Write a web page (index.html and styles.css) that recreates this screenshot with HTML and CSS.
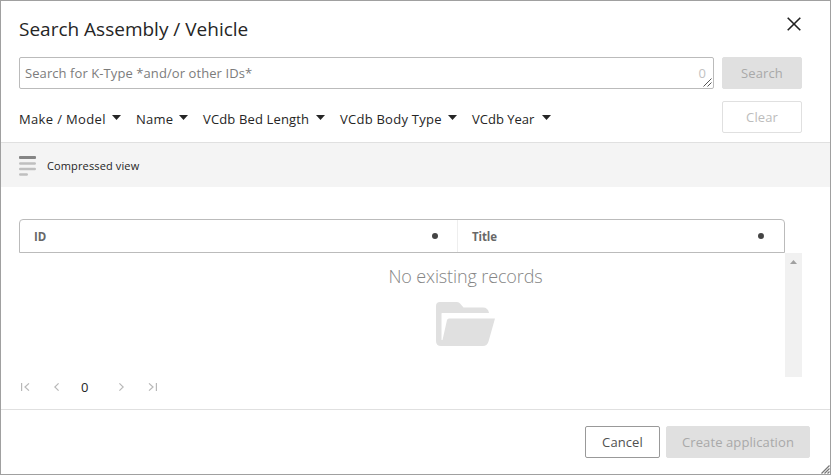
FILE: index.html
```html
<!DOCTYPE html>
<html lang="en">
<head>
<meta charset="utf-8">
<title>Search Assembly / Vehicle</title>
<link rel="stylesheet" href="styles.css">
</head>
<body>
<div class="dialog">
  <header class="header">
    <h1 class="title">Search Assembly / Vehicle</h1>
    <svg class="close" width="14" height="14" viewBox="0 0 14 14"><path d="M.7.7l12.6 12.6M13.3.7L.7 13.3"/></svg>
  </header>
  <section class="search">
    <div class="field">
      <span class="placeholder">Search for K-Type *and/or other IDs*</span>
      <span class="count">0</span>
      <svg class="grip" width="9" height="9" viewBox="0 0 9 9"><path d="M.5 8.5l8-8M4.5 8.5l4-4"/></svg>
    </div>
    <button class="btn filled">Search</button>
    <nav class="filters">
      <span class="filter f1"><span>Make / Model</span><i class="caret"></i></span>
      <span class="filter f2"><span>Name</span><i class="caret"></i></span>
      <span class="filter f3"><span>VCdb Bed Length</span><i class="caret"></i></span>
      <span class="filter f4"><span>VCdb Body Type</span><i class="caret"></i></span>
      <span class="filter f5"><span>VCdb Year</span><i class="caret"></i></span>
    </nav>
    <button class="btn ghost">Clear</button>
  </section>
  <div class="toolbar">
    <svg width="17" height="20" viewBox="0 0 17 20"><rect width="17" height="3" rx="1" fill="#858585"/><path d="M1.300 7.500h14.400M1.300 13h14.400M1.300 18.500h6.400" stroke="#bfbfbf" stroke-width="2.600" stroke-linecap="round"/></svg>
    <span class="view">Compressed view</span>
  </div>
  <main class="content">
    <div class="thead">
      <div class="th"><span>ID</span><i class="dot"></i></div>
      <div class="th second"><span>Title</span><i class="dot"></i></div>
    </div>
    <div class="tbody">
      <div class="empty">
        <span class="message">No existing records</span>
        <svg width="59" height="44" viewBox="0 0 59 44"><path fill="#e0e0e0" d="M4 0H21Q23 0 24.500 2L27.500 5.500H47Q52 5.500 53 11H6Q5.500 11 5.500 12V38L6.500 38L11 18Q11.500 16.500 13 16.500H59L52.500 39.500Q51 44 47 44H5Q0 44 0 39V4Q0 0 4 0Z"/></svg>
      </div>
      <div class="scrollbar"><svg width="7" height="4" viewBox="0 0 7 4"><path fill="#a0a0a0" d="M3.500 0L7 4H0z"/></svg></div>
    </div>
    <div class="pager">
      <svg class="first" width="9" height="8" viewBox="0 0 9 8"><path d="M.6 0v8M8 .4L4 4l4 3.600"/></svg>
      <svg class="prev" width="5" height="8" viewBox="0 0 5 8"><path d="M4.600 .4L.8 4l3.800 3.600"/></svg>
      <span class="page">0</span>
      <svg class="next" width="5" height="8" viewBox="0 0 5 8"><path d="M.4 .4L4.200 4 .4 7.600"/></svg>
      <svg class="last" width="9" height="8" viewBox="0 0 9 8"><path d="M8.400 0v8M1 .4L5 4 1 7.600"/></svg>
    </div>
  </main>
  <footer class="footer">
    <button class="btn outline">Cancel</button>
    <button class="btn filled create">Create application</button>
  </footer>
  <svg class="corner" width="9" height="9" viewBox="0 0 9 9"><path d="M.5 8.500l8-8M3.500 8.500l5-5M6.500 8.500l2-2"/></svg>
</div>
</body>
</html>
```

FILE: styles.css
```css
* { box-sizing: border-box; }
body {
  margin: 0;
  font-family: "Open Sans", "Noto Sans", sans-serif;
  font-size: 13px;
  color: #252525;
}
svg { display: block; flex: none; }
.dialog {
  position: relative;
  width: 831px;
  height: 475px;
  border: 1px solid #a0a0a0;
  background: #fff;
  overflow: hidden;
}
.header {
  display: flex;
  justify-content: space-between;
  height: 56px;
  padding: 0 29px 0 18px;
}
.title {
  margin: 13px 0 0;
  font-size: 19px;
  line-height: 30px;
  font-weight: 400;
  white-space: nowrap;
}
.close { margin-top: 16px; stroke: #222; stroke-width: 1.6; fill: none; }
.search {
  display: grid;
  grid-template-columns: 695px 80px;
  grid-template-rows: 32px 32px;
  gap: 12px 8px;
  height: 85px;
  padding-left: 18px;
}
.field {
  position: relative;
  display: flex;
  justify-content: space-between;
  padding: 0 7px 0 5px;
  border: 1px solid #bbb;
  border-radius: 2px;
  line-height: 31px;
  color: #7c7c7c;
}
.placeholder { letter-spacing: .08px; }
.count { color: #c2c2c2; }
.grip { position: absolute; right: 1px; bottom: 1px; stroke: #555; stroke-width: 1; fill: none; }
.btn {
  height: 32px;
  padding: 0;
  border: 1px solid #e0e0e0;
  border-radius: 2px;
  background: #fff;
  color: #bcbcbc;
  font: 13px/30px "Open Sans", "Noto Sans", sans-serif;
  letter-spacing: .1px;
  white-space: nowrap;
}
.filled { background: #e0e0e0; color: #a9a9a9; }
.filters { display: flex; align-items: center; padding-top: 4px; white-space: nowrap; }
.filter { display: flex; justify-content: space-between; flex: none; margin-right: 15px; line-height: 20px; }
.f1 { width: 102px; letter-spacing: .35px; }
.f2 { width: 52px; letter-spacing: .2px; }
.f3 { width: 122px; letter-spacing: .15px; }
.f4 { width: 117px; letter-spacing: .25px; }
.f5 { width: 79px; }
.caret {
  width: 9px;
  height: 5px;
  margin-top: 6px;
  background: #252525;
  clip-path: polygon(0 0, 100% 0, 50% 100%);
}
.toolbar {
  display: flex;
  align-items: center;
  gap: 11px;
  height: 45px;
  padding: 1px 0 0 18px;
  border-top: 1px solid #e0e0e0;
  background: #f4f4f4;
  font-size: 11px;
  letter-spacing: .13px;
}
.content { height: 222px; padding: 32px 0 0 18px; }
.thead {
  display: flex;
  width: 766px;
  height: 34px;
  border: 1px solid #bbb;
  border-radius: 4px 4px 0 0;
  font-size: 11.500px;
  font-weight: 700;
  letter-spacing: -.1px;
  color: #686868;
}
.th {
  display: flex;
  align-items: center;
  justify-content: space-between;
  width: 437px;
  padding: 1px 19px 0 14px;
}
.second { width: 327px; padding-right: 20px; border-left: 1px solid #eee; }
.dot { width: 6px; height: 6px; margin-top: -2px; border-radius: 50%; background: #444; }
.tbody { display: flex; width: 783px; height: 124px; }
.empty {
  display: flex;
  flex-direction: column;
  align-items: center;
  width: 766px;
  padding: 8px 0 0 127px;
}
.message { margin-bottom: 11px; font-size: 18px; line-height: 30px; font-weight: 300; letter-spacing: -.12px; color: #858585; white-space: nowrap; }
.scrollbar { width: 17px; padding: 7px 0 0 5px; background: #f1f1f1; }
.pager { display: flex; align-items: center; height: 20px; padding-left: 2px; }
.pager path { fill: none; stroke: #b8b8b8; stroke-width: 1.200; }
.prev { margin-left: 24px; }
.page { width: 8px; margin: 0 30px 0 22px; font-size: 13px; line-height: 20px; }
.last { margin-left: 24px; }
.footer {
  display: flex;
  justify-content: flex-end;
  gap: 6px;
  padding: 16px 20px 0 0;
  border-top: 1px solid #e0e0e0;
}
.outline { width: 75px; border-color: #999; color: #505050; }
.create { width: 144px; }
.corner { position: absolute; right: 0; bottom: 0; stroke: #777; stroke-width: 1.200; fill: none; }
```
